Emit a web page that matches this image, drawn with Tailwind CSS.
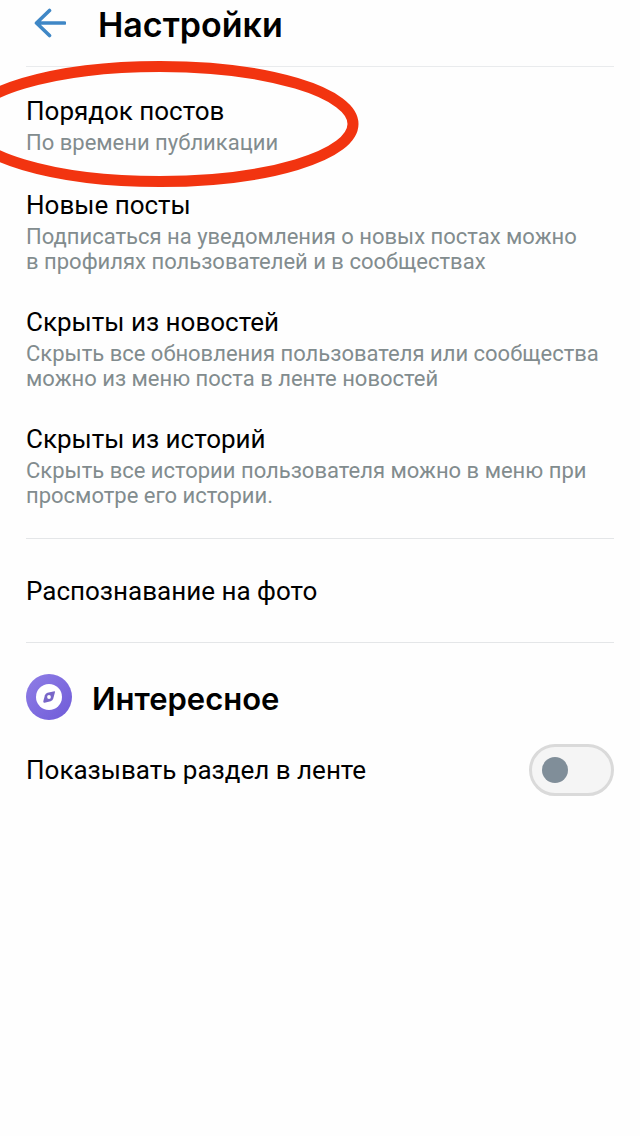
<!DOCTYPE html>
<html lang="ru">
<head>
<meta charset="utf-8">
<meta name="viewport" content="width=device-width, initial-scale=1">
<title>Настройки</title>
<script src="https://cdn.jsdelivr.net/npm/@tailwindcss/browser@4"></script>
</head>
<body class="min-h-screen overflow-x-hidden bg-[#fefefe] font-['Roboto',sans-serif] text-black">
<header class="mx-[26px] flex h-[67px] items-start border-b border-[#e9ebed]">
  <button type="button" aria-label="Назад" class="mt-2 ml-2 h-8 w-8">
    <svg viewBox="0 0 32 32" class="h-8 w-8" fill="none" stroke="#3f87c6" stroke-width="3.6" stroke-linecap="round" stroke-linejoin="round"><path d="M15.500 2.500 2.500 15l13 12.500M3 15h27.500"/></svg>
  </button>
  <h1 class="ml-8 pt-1 font-['Inter',sans-serif] text-[34px] leading-[42px] font-semibold">Настройки</h1>
</header>
<main class="px-[26px]">
  <section class="relative border-b border-[#e4e6e8] pt-[25px] pb-[30px]">
    <svg class="pointer-events-none absolute top-[-7px] left-[-66px] h-[128px] w-[400px]" viewBox="0 0 400 128" fill="none" aria-hidden="true"><ellipse cx="200" cy="64" rx="193" ry="57.500" stroke="#f23410" stroke-width="11"/></svg>
    <ul class="flex flex-col gap-[29px]">
      <li class="pb-0.5">
        <h2 class="text-[26px] leading-[38px]">Порядок постов</h2>
        <p class="text-[22px] leading-[25px] text-[#828c8e]">По времени публикации</p>
      </li>
      <li>
        <h2 class="text-[26px] leading-[38px]">Новые посты</h2>
        <p class="text-[22px] leading-[25px] text-[#828c8e]">Подписаться на уведомления о новых постах можно<br>в профилях пользователей и в сообществах</p>
      </li>
      <li>
        <h2 class="text-[26px] leading-[38px]">Скрыты из новостей</h2>
        <p class="text-[22px] leading-[25px] text-[#828c8e]">Скрыть все обновления пользователя или сообщества<br>можно из меню поста в ленте новостей</p>
      </li>
      <li>
        <h2 class="text-[26px] leading-[38px]">Скрыты из историй</h2>
        <p class="text-[22px] leading-[25px] text-[#828c8e]">Скрыть все истории пользователя можно в меню при<br>просмотре его истории.</p>
      </li>
    </ul>
  </section>
  <section class="flex h-[104px] items-center border-b border-[#e4e6e8]">
    <h2 class="text-[26px] leading-[38px]">Распознавание на фото</h2>
  </section>
  <section class="pt-[31px]">
    <div class="flex h-[46px] items-center gap-5">
      <svg viewBox="0 0 46 46" class="h-[46px] w-[46px]" aria-hidden="true">
        <defs><linearGradient id="g" x1="0" y1="0" x2="1" y2="1"><stop offset="0" stop-color="#8f7ee6"/><stop offset="1" stop-color="#6f5bd8"/></linearGradient></defs>
        <circle cx="23" cy="23" r="23" fill="url(#g)"/>
        <circle cx="23" cy="23" r="13" fill="#fff"/>
        <path d="M28.500 17.300 21.500 18.700Q19.500 19.300 18.900 21.200L17.300 27.300Q17 29 18.600 28.700L24.700 27.200Q26.600 26.600 27.200 24.700L28.900 18.500Q29.200 17.200 28.500 17.300Z" fill="#7866c8"/>
        <circle cx="23" cy="23" r="1.900" fill="#fff"/>
      </svg>
      <h2 class="pt-1 font-['Inter',sans-serif] text-[31px] leading-[38px] font-semibold">Интересное</h2>
    </div>
    <label class="mt-6 flex h-[52px] items-center justify-between">
      <span class="text-[26px] leading-[38px]">Показывать раздел в ленте</span>
      <input type="checkbox" role="switch" class="h-[52px] w-[85px] shrink-0 appearance-none rounded-full border-[3px] border-[#dadada] bg-[#f5f5f5] before:mt-[10px] before:ml-[10px] before:block before:h-[26px] before:w-[26px] before:rounded-full before:bg-[#808e99] before:content-[''] checked:before:ml-[43px]">
    </label>
  </section>
</main>
</body>
</html>
